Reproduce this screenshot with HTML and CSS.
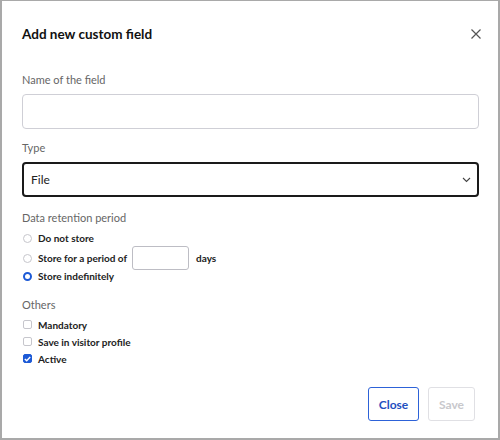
FILE: index.html
```html
<!DOCTYPE html>
<html>
<head>
<meta charset="utf-8">
<link rel="stylesheet" href="styles.css">
</head>
<body>
<div class="dialog">
  <div class="header">
    <h1 class="title">Add new custom field</h1>
    <button class="close-x" aria-label="Close">
      <svg width="10" height="10" viewBox="0 0 10 10"><path d="M0.5 0.5 L9.5 9.5 M9.5 0.5 L0.5 9.5" stroke="#555" stroke-width="1.2" fill="none"/></svg>
    </button>
  </div>
  <div class="field">
    <div class="label">Name of the field</div>
    <div class="input"></div>
  </div>
  <div class="field type">
    <div class="label">Type</div>
    <div class="select">
      <span>File</span>
      <svg width="9" height="6" viewBox="0 0 9 6"><path d="M1 1 L4.5 4.5 L8 1" stroke="#444" stroke-width="1.1" fill="none"/></svg>
    </div>
  </div>
  <div class="group retention">
    <div class="label">Data retention period</div>
    <div class="opt r1"><span class="radio"></span>Do not store</div>
    <div class="opt r2"><span class="radio"></span>Store for a period of<span class="days-input"></span><span class="days">days</span></div>
    <div class="opt r3"><span class="radio on"></span>Store indefinitely</div>
  </div>
  <div class="group others">
    <div class="label">Others</div>
    <div class="opt"><span class="check"></span>Mandatory</div>
    <div class="opt"><span class="check"></span>Save in visitor profile</div>
    <div class="opt"><span class="check on"><svg width="7" height="6" viewBox="0 0 7 6"><path d="M0.8 3 L2.7 4.8 L6.2 1" stroke="#fff" stroke-width="1.4" fill="none"/></svg></span>Active</div>
  </div>
  <div class="footer">
    <button class="btn primary">Close</button>
    <button class="btn disabled">Save</button>
  </div>
</div>
</body>
</html>
```

FILE: styles.css
```css
* { box-sizing: border-box; }
html, body { margin: 0; padding: 0; background: #fff; }
body { font-family: Lato, "Noto Sans", sans-serif; color: #1f1f1f; }
.dialog {
  width: 500px;
  height: 440px;
  border: 2px solid #a9a9a9;
  border-top-width: 1px;
  padding: 0 19px 0 20px;
  display: flex;
  flex-direction: column;
}
.header {
  display: flex;
  align-items: center;
  justify-content: space-between;
  height: 64px;
  padding-top: 1px;
}
.title { margin: 0; font-size: 13.5px; font-weight: 700; color: #111; }
.close-x { border: 0; background: none; padding: 0; margin-right: -2px; width: 10px; height: 10px; display: flex; }
.label { font-size: 11px; color: #666; line-height: 14px; }
.field .label { margin-top: 8px; margin-bottom: 7px; }
.field.type .label { margin-top: 12px; }
.input {
  height: 35px;
  border: 1px solid #cfcfd6;
  border-radius: 4px;
}
.select {
  height: 35px;
  border: 2px solid #1a1a1a;
  border-radius: 4px;
  display: flex;
  align-items: center;
  justify-content: space-between;
  padding: 0 6px 0 7px;
  font-size: 12px;
  color: #222;
}
.select span { margin-top: -1px; }
.group { margin-top: 14px; }
.group .label { margin-bottom: 4px; }
.opt {
  display: flex;
  align-items: center;
  font-size: 10px;
  font-weight: 700;
  color: #222;
  height: 17px;
}
.retention .r1 { height: 18px; }
.retention .r2 { height: 22px; }
.retention .r3 { height: 14px; }
.radio {
  width: 9px; height: 9px;
  border: 1px solid #c6c6cc;
  border-radius: 50%;
  margin: 0 6px 0 1px;
  flex: none;
}
.radio.on { border: 2.5px solid #1d5ad6; }
.days-input {
  width: 57px; height: 24px;
  border: 1px solid #bdbdc4;
  border-radius: 3px;
  margin: 0 7px 0 5px;
  flex: none;
}
.others { margin-top: 15px; }
.others .label { margin-bottom: 4px; }
.check {
  width: 9px; height: 9px;
  border: 1px solid #c6c6cc;
  border-radius: 2px;
  margin: 0 6px 0 1px;
  flex: none;
  display: flex; align-items: center; justify-content: center;
}
.check.on { background: #1d5ad6; border-color: #1d5ad6; }
.footer {
  margin-top: auto;
  display: flex;
  justify-content: flex-end;
  gap: 9px;
  padding-right: 4px;
  margin-bottom: 17px;
}
.btn {
  font-family: inherit;
  font-size: 12px;
  font-weight: 700;
  height: 34px;
  border-radius: 3px;
  background: #fff;
  padding: 0 8px;
}
.btn.primary { border: 1px solid #2d62d8; color: #1f4fc0; width: 51px; }
.btn.disabled { border: 1px solid #e0e0e4; color: #c8c8cc; width: 47px; }
```
